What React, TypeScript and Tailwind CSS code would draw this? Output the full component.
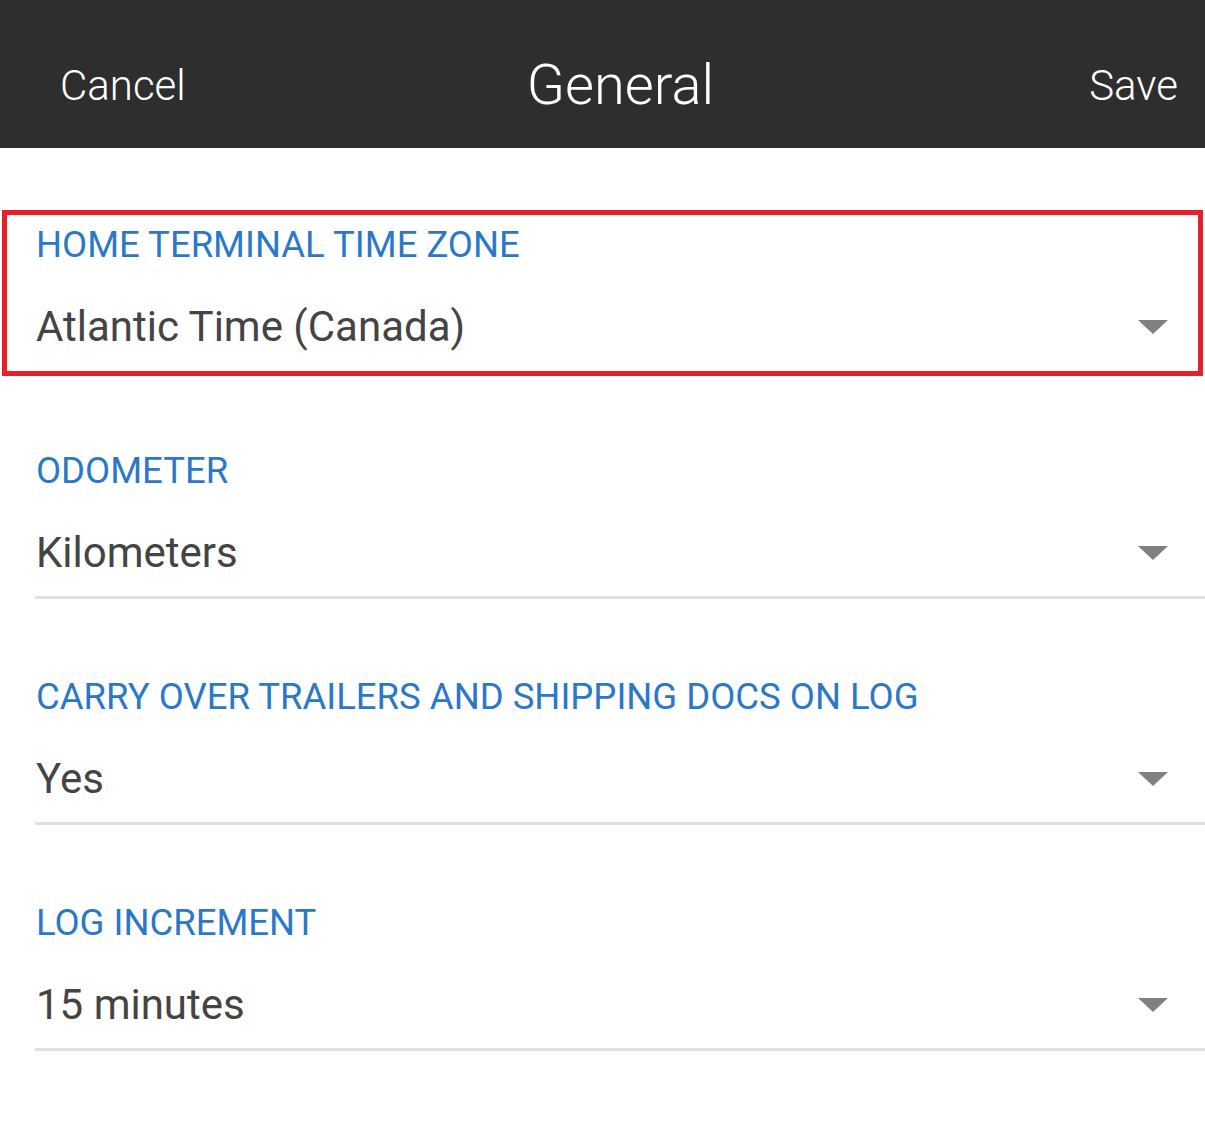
import React from "react";

interface Setting {
  label: string;
  value: string;
}

const settings: Setting[] = [
  { label: "HOME TERMINAL TIME ZONE", value: "Atlantic Time (Canada)" },
  { label: "ODOMETER", value: "Kilometers" },
  { label: "CARRY OVER TRAILERS AND SHIPPING DOCS ON LOG", value: "Yes" },
  { label: "LOG INCREMENT", value: "15 minutes" },
];

function Caret() {
  return (
    <svg width="30" height="14" viewBox="0 0 30 14" className="shrink-0">
      <path d="M0 0 L30 0 L15 14 Z" fill="#808080" />
    </svg>
  );
}

function Field({ s, boxed }: { s: Setting; boxed?: boolean }) {
  return (
    <>
      <div
        className={`flex items-center text-[36.5px] leading-none text-[#2b78c9] ${
          boxed ? "h-[60px]" : "h-[70px]"
        }`}
      >
        {s.label}
      </div>
      <div
        className={`flex h-[70px] items-center justify-between ${
          boxed ? "mt-[17px]" : "mt-[12px]"
        }`}
      >
        <span className="text-[42px] leading-none text-[#444444]">{s.value}</span>
        <Caret />
      </div>
    </>
  );
}

export default function App() {
  const [first, ...rest] = settings;
  return (
    <div className="h-[1131px] w-[1205px] overflow-hidden bg-white font-['Roboto',sans-serif]">
      {/* top bar */}
      <div className="flex h-[148px] items-center justify-between bg-[#2e2e2e] pl-[60px] pr-[27px] pt-[22px] font-light text-white">
        <span className="text-[42px]">Cancel</span>
        <span className="mr-[34px] text-[56px]">General</span>
        <span className="text-[42px]">Save</span>
      </div>

      <div className="mt-[62px] mx-[2px] h-[166px] border-[5px] border-[#e5202a] pl-[29px] pr-[30px]">
        <Field s={first} boxed />
      </div>

      {rest.map((s) => (
        <div key={s.label} className="mt-[60px] pb-[3px] pl-[36px]">
          <div className="pr-[37px]">
            <Field s={s} />
          </div>
          <div className="ml-[-1px] mt-[8px] h-[3px] bg-[#e0e0e0]" />
        </div>
      ))}
    </div>
  );
}
